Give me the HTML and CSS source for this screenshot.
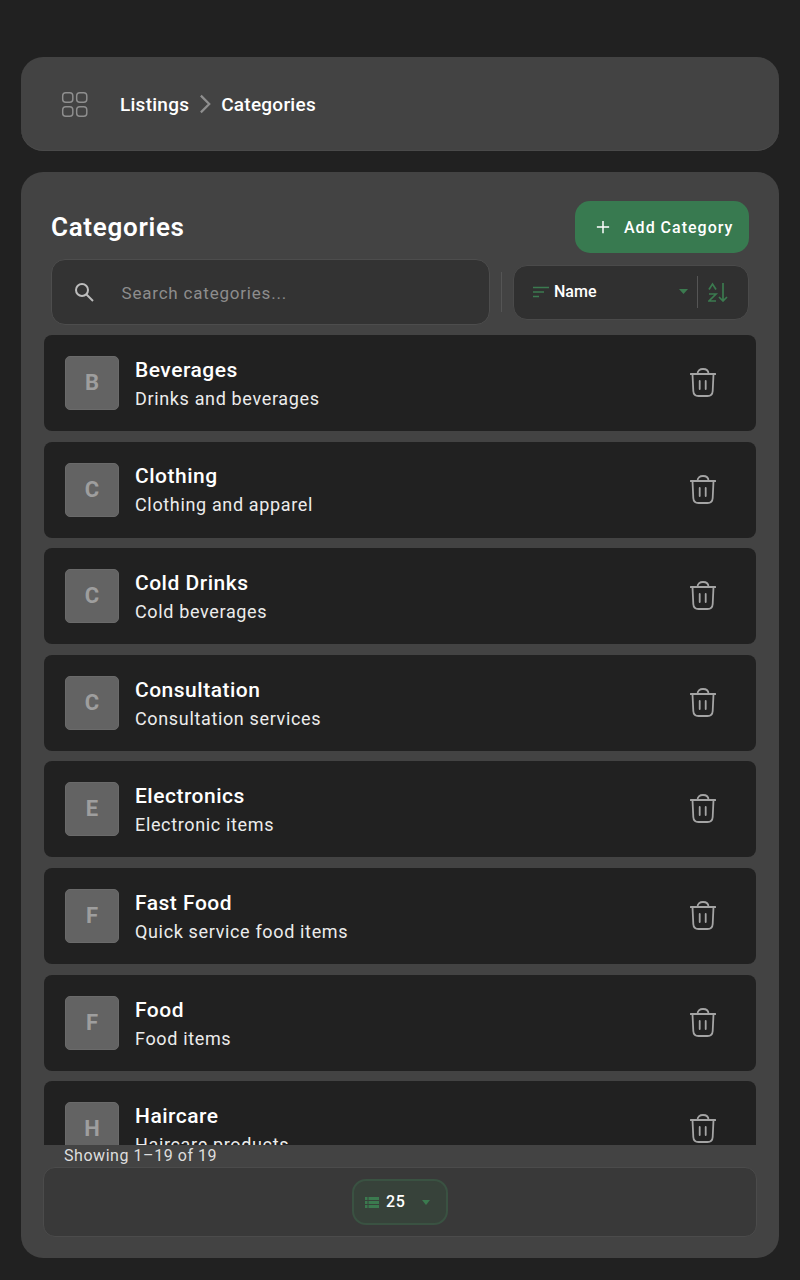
FILE: index.html
```html
<!DOCTYPE html>
<html lang="en">
<head>
<meta charset="utf-8">
<title>Categories</title>
<link rel="stylesheet" href="styles.css">
</head>
<body>
<svg class="sprite" aria-hidden="true"><symbol id="trash" viewBox="0 0 26 29"><path fill="none" stroke="currentColor" stroke-width="1.8" stroke-linecap="round" d="M.7 6h24.600M7.500 6C7.500 2.500 10 1 13 1s5.500 1.500 5.500 5M2.500 6l.8 17c.2 3.500 2.200 5 5.200 5h9c3 0 5-1.500 5.200-5l.8-17M9.700 13v8M15.700 13v8"/></symbol></svg>
<main class="page">
  <nav class="crumbs">
    <svg class="crumbs-icon" viewBox="0 0 28 28" fill="none" stroke="#8f8f8f" stroke-width="1.5"><rect x="1.75" y="1.75" width="10.5" height="10" rx="3.2"/><rect x="16.25" y="1.75" width="10.5" height="10" rx="3.2"/><rect x="1.75" y="16.25" width="10.5" height="10" rx="3.2"/><rect x="16.25" y="16.25" width="10.5" height="10" rx="3.2"/></svg>
    <span class="crumb">Listings</span>
    <svg class="crumb-sep" viewBox="0 0 14 20" fill="none" stroke="#8f8f8f" stroke-width="2.4"><path d="M2 1l9 9-9 9"/></svg>
    <span class="crumb">Categories</span>
  </nav>
  <section class="panel">
    <header class="panel-head">
      <h1 class="title">Categories</h1>
      <button class="add"><svg class="add-icon" viewBox="0 0 16 16" fill="none" stroke="#fff" stroke-width="1.7"><path d="M8 1v14M1 8h14"/></svg><span>Add Category</span></button>
    </header>
    <div class="tools">
      <div class="search">
        <svg class="search-icon" viewBox="0 0 20 20" fill="none" stroke="#bdbdbd" stroke-width="2"><circle cx="8" cy="8" r="6"/><path d="M12.500 12.500l6.500 6.500"/></svg>
        <span class="placeholder">Search categories...</span>
      </div>
      <div class="vline"></div>
      <div class="sort">
        <svg class="sort-icon" viewBox="0 0 16 12" fill="none" stroke="#3b7a4f" stroke-width="1.4"><path d="M0 1.500h16M0 6h11M0 10.500h6"/></svg>
        <span class="sort-name">Name</span>
        <svg class="caret" viewBox="0 0 9 5" fill="#3b7a4f"><path d="M0 0h9L4.500 5z"/></svg>
        <div class="sort-line"></div>
        <svg class="az" viewBox="0 0 20 20" fill="none" stroke="#3b7a4f" stroke-width="1.700"><path d="M1 7.500l3.500-5.500L8 7.500M1 12h7l-7 7h7M15 1v18M11 15l4 4 4-4"/></svg>
      </div>
    </div>
    <ul class="list">
      <li class="row"><div class="avatar">B</div><div class="info"><div class="name">Beverages</div><div class="desc">Drinks and beverages</div></div><svg class="trash"><use href="#trash"/></svg></li>
      <li class="row"><div class="avatar">C</div><div class="info"><div class="name">Clothing</div><div class="desc">Clothing and apparel</div></div><svg class="trash"><use href="#trash"/></svg></li>
      <li class="row"><div class="avatar">C</div><div class="info"><div class="name">Cold Drinks</div><div class="desc">Cold beverages</div></div><svg class="trash"><use href="#trash"/></svg></li>
      <li class="row"><div class="avatar">C</div><div class="info"><div class="name">Consultation</div><div class="desc">Consultation services</div></div><svg class="trash"><use href="#trash"/></svg></li>
      <li class="row"><div class="avatar">E</div><div class="info"><div class="name">Electronics</div><div class="desc">Electronic items</div></div><svg class="trash"><use href="#trash"/></svg></li>
      <li class="row"><div class="avatar">F</div><div class="info"><div class="name">Fast Food</div><div class="desc">Quick service food items</div></div><svg class="trash"><use href="#trash"/></svg></li>
      <li class="row"><div class="avatar">F</div><div class="info"><div class="name">Food</div><div class="desc">Food items</div></div><svg class="trash"><use href="#trash"/></svg></li>
      <li class="row"><div class="avatar">H</div><div class="info"><div class="name">Haircare</div><div class="desc">Haircare products</div></div><svg class="trash"><use href="#trash"/></svg></li>
    </ul>
    <div class="showing">Showing 1–19 of 19</div>
    <div class="pager">
      <div class="size">
        <svg class="size-icon" viewBox="0 0 14 11" fill="#3b7a4f"><path d="M0 0h2.500v3H0zM3.500 0H14v3H3.500zM0 4h2.500v3H0zM3.500 4H14v3H3.500zM0 8h2.500v3H0zM3.500 8H14v3H3.500z"/></svg>
        <span class="size-num">25</span>
        <svg class="size-caret" viewBox="0 0 8 5" fill="#3b7a4f"><path d="M0 0h8L4 5z"/></svg>
      </div>
    </div>
  </section>
</main>
</body>
</html>
```
FILE: styles.css
```css
* { box-sizing: border-box; }
html, body { margin: 0; height: 100%; }
body { background: #212121; font-family: Roboto, "Liberation Sans", sans-serif; color: #fff; overflow: hidden; }
.sprite { display: none; }
.page { height: 1280px; padding: 57px 21.5px 22px 21px; display: flex; flex-direction: column; gap: 21px; }
.crumbs { height: 94px; flex: none; background: #434343; border-radius: 22px; display: flex; align-items: center; padding-left: 40px; box-shadow: inset 0 -1px 0 #4a4a4a; }
.crumbs-icon { width: 27px; height: 27px; margin-right: 32px; }
.crumb { font-size: 19px; font-weight: 500; line-height: 24px; letter-spacing: 0.25px; padding-top: 1px; }
.crumb-sep { width: 13px; height: 20px; margin: 0 9px 0 10px; }
.panel { flex: 1; min-height: 0; background: #434343; border-radius: 22px; padding: 29px 22.5px 21px 23px; display: flex; flex-direction: column; }
.panel-head { height: 52px; flex: none; padding: 0 7px; display: flex; align-items: center; justify-content: space-between; }
.title { margin: 0; font-size: 26px; font-weight: 600; letter-spacing: 0.7px; }
.add { width: 174px; height: 52px; border: 0; border-radius: 15px; background: #387a50; color: #fff; display: flex; align-items: center; padding: 0 0 0 21px; font: 500 16px Roboto, sans-serif; letter-spacing: 1px; }
.add-icon { width: 14px; height: 14px; margin-right: 14px; }
.tools { height: 66px; margin-top: 6px; flex: none; padding: 0 7px; display: flex; align-items: center; }
.search { width: 439px; height: 66px; background: #333; border: 1px solid #4d4d4d; border-radius: 14px; display: flex; align-items: center; padding-left: 21.500px; }
.search-icon { width: 20px; height: 20px; margin-right: 28px; }
.placeholder { font-size: 17px; letter-spacing: 0.8px; color: #8d8d8d; padding-top: 2px; }
.vline { width: 1px; height: 40px; background: #555; margin: 0 11px; }
.sort { width: 236px; height: 55px; background: #303030; border: 1px solid #4a4a4a; border-radius: 14px; display: flex; align-items: center; padding-left: 19px; }
.sort-icon { width: 16px; height: 12px; margin-right: 5px; }
.sort-name { font-size: 16px; font-weight: 500; width: 124.500px; padding-bottom: 2px; }
.caret { width: 9px; height: 5px; margin: 0 9.500px 1px 0; }
.sort-line { width: 1px; height: 32px; background: #555; margin-right: 10px; }
.az { width: 20px; height: 20px; }
.list { flex: 1; min-height: 0; overflow: hidden; list-style: none; margin: 10px 0 0; padding: 0; display: flex; flex-direction: column; gap: 10.620px; }
.row { flex: none; height: 96px; background: #212121; border-radius: 8px; display: flex; align-items: center; padding: 0 40px 0 21px; }
.avatar { width: 54px; height: 54px; background: #636363; border: 1px solid #6a6a6a; border-radius: 5px; color: #9e9e9e; display: flex; align-items: center; justify-content: center; font-size: 22px; font-weight: 700; padding-bottom: 1px; }
.info { flex: 1; margin-left: 16px; padding-top: 2.700px; }
.name { font-size: 21px; font-weight: 500; line-height: 28px; letter-spacing: 0.5px; }
.desc { font-size: 18px; line-height: 28px; letter-spacing: 0.65px; color: #ececec; margin-top: 1px; }
.trash { width: 26px; height: 29px; flex: none; color: #a4a4a4; margin-bottom: 1px; }
.showing { flex: none; height: 22px; padding: 1px 0 0 20px; font-size: 16px; line-height: 20px; letter-spacing: 0.55px; color: #dedede; }
.pager { height: 70px; flex: none; margin: 0 -0.700px; background: #393939; border: 1px solid #4b4b4b; border-radius: 12px; display: flex; align-items: center; justify-content: center; }
.size { width: 96px; height: 46px; background: #37423a; border: 2px solid #3a5242; border-radius: 14px; display: flex; align-items: center; padding-left: 11px; }
.size-icon { width: 14px; height: 11px; margin-right: 7px; }
.size-num { font-size: 16px; font-weight: 500; letter-spacing: 0.6px; width: 36px; padding-bottom: 1px; }
.size-caret { width: 8px; height: 5px; }
```
